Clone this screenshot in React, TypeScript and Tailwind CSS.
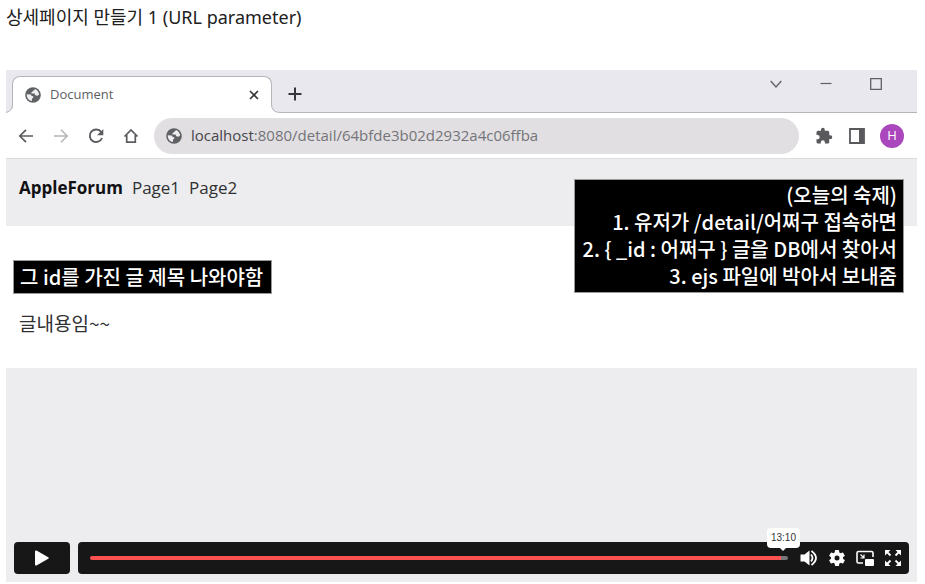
import { type ReactNode } from 'react';

const SANS = "font-['Noto_Sans','Noto_Sans_CJK_KR',sans-serif]";
const BROWSER = "font-['Open_Sans','Noto_Sans_CJK_KR',sans-serif]";
const KOREAN = "font-['Noto_Sans_CJK_KR',sans-serif]";

type IconProps = { className?: string; viewBox?: string; children: ReactNode };

function Icon({ className = 'size-5', viewBox = '0 0 24 24', children }: IconProps) {
  return (
    <svg className={`block shrink-0 ${className}`} viewBox={viewBox} fill="none" aria-hidden="true">
      {children}
    </svg>
  );
}

function IconButton({ label, className = '', children }: { label: string; className?: string; children: ReactNode }) {
  return (
    <button type="button" aria-label={label} className={`flex shrink-0 items-center justify-center ${className}`}>
      {children}
    </button>
  );
}

function Globe() {
  return (
    <Icon className="size-4" viewBox="0 0 16 16">
      <circle cx="8" cy="8" r="7.8" fill="#5f6165" />
      <path d="M1.8 7.2 5.6 7.600 6.800 9 8.300 9.300 8.100 11 7 11.500 6.900 14.100C3.800 13.600 1.500 10.600 1.800 7.200Z" fill="#eeeef0" />
      <path d="M9.800 2C9.800 3.600 8.200 3.300 7.700 4.300 7.600 5.200 5.800 5.200 6.300 6.500L9.500 6.600 10.300 8.200 12.200 8.700 14.100 7.800C13.900 5 12.400 2.800 9.800 2Z" fill="#eeeef0" />
    </Icon>
  );
}

function TabStrip() {
  return (
    <div className="flex h-[43px] items-end bg-[#e8e8ee]">
      <Icon className="relative z-10 -mr-px h-[37px] w-[7px]" viewBox="0 0 7 37">
        <path d="M0 37Q7 35 7 29V37Z" fill="#fff" />
        <path d="M0 36.500Q6.500 35 6.500 28" stroke="#b5b5bc" />
      </Icon>
      <div className="flex h-[37px] w-[260px] items-center rounded-t-lg border-x border-t border-[#b5b5bc] bg-white pr-[9px] pl-3">
        <Globe />
        <span className="ml-[9px] flex-1 text-[13px] text-[#606064]">Document</span>
        <IconButton label="Close tab" className="size-4">
          <Icon className="size-[10px]" viewBox="0 0 10 10">
            <path d="m1 1 8 8M9 1 1 9" stroke="#35353a" strokeWidth="1.6" />
          </Icon>
        </IconButton>
      </div>
      <Icon className="relative z-10 -ml-px h-[37px] w-[9px]" viewBox="0 0 9 37">
        <path d="M0 29H.5Q.5 36.500 9 36.500V37H0Z" fill="#fff" />
        <path d="M.5 28Q.5 36.500 9 36.500" stroke="#b5b5bc" />
      </Icon>
      <div className="flex h-full flex-1 items-start justify-between border-b border-[#b5b5bc] pr-[34px]">
        <IconButton label="New tab" className="mt-[15px] ml-[6px] size-[18px]">
          <Icon className="size-[14px]" viewBox="0 0 14 14">
            <path d="M7 .5v13M.5 7h13" stroke="#35353a" strokeWidth="2" />
          </Icon>
        </IconButton>
        <div className="mt-[7px] flex gap-[36px]">
          <IconButton label="Search tabs" className="size-[14px]">
            <Icon className="size-3" viewBox="0 0 12 12">
              <path d="m.7 3 5.300 6 5.300-6" stroke="#606064" strokeWidth="1.3" />
            </Icon>
          </IconButton>
          <IconButton label="Minimize" className="size-[14px]">
            <Icon className="size-3" viewBox="0 0 12 12">
              <path d="M0.5 5.500h11" stroke="#606064" strokeWidth="1.2" />
            </Icon>
          </IconButton>
          <IconButton label="Maximize" className="size-[14px]">
            <Icon className="size-3" viewBox="0 0 12 12">
              <path d="M.7.7h10.6v10.6H.7Z" stroke="#606064" strokeWidth="1.3" />
            </Icon>
          </IconButton>
        </div>
      </div>
    </div>
  );
}

function Toolbar() {
  return (
    <div className="flex h-[46px] items-center border-b border-[#dcdcdf] bg-white pr-[13px] pl-[10px]">
      <div className="flex gap-[15px]">
        <IconButton label="Back" className="size-5">
          <Icon className="size-4" viewBox="0 0 16 16">
            <path d="M15 8H2M8 1.8 1.8 8 8 14.2" stroke="#5c5c60" strokeWidth="1.7" />
          </Icon>
        </IconButton>
        <IconButton label="Forward" className="size-5">
          <Icon className="size-4" viewBox="0 0 16 16">
            <path d="M1 8h13M8 1.8 14.2 8 8 14.2" stroke="#b5b5b8" strokeWidth="1.5" />
          </Icon>
        </IconButton>
        <IconButton label="Reload" className="size-5">
          <Icon className="size-4" viewBox="0 0 16 16">
            <path d="M13.2 4A6.300 6.300 0 1 0 14 10" stroke="#5c5c60" strokeWidth="1.9" />
            <path d="M15.300 1v6.300H9Z" fill="#5c5c60" />
          </Icon>
        </IconButton>
        <IconButton label="Home" className="size-5">
          <Icon className="size-4" viewBox="0 0 16 16">
            <path d="M1.500 8.500 8 2l6.500 6.500M3.700 7v7.200h8.600V7" stroke="#5c5c60" strokeWidth="1.700" />
          </Icon>
        </IconButton>
      </div>
      <div className="mr-[15px] ml-[13px] flex h-9 flex-1 items-center rounded-full bg-[#e1dfe2] pl-3">
        <Globe />
        <div className="ml-[9px] text-[15px] text-[#747478]">
          <span className="text-[#454549]">localhost</span>:8080/detail/64bfde3b02d2932a4c06ffba
        </div>
      </div>
      <div className="flex items-center gap-[13px]">
        <IconButton label="Extensions" className="size-5">
          <Icon className="size-[18px]">
            <path d="M20.500 11H19V7a2 2 0 0 0-2-2h-4V3.500a2.500 2.500 0 0 0-5 0V5H4a2 2 0 0 0-2 2v3.800h1.500a2.700 2.700 0 0 1 0 5.400H2V20a2 2 0 0 0 2 2h3.800v-1.500a2.700 2.700 0 0 1 5.400 0V22H17a2 2 0 0 0 2-2v-4h1.500a2.500 2.500 0 0 0 0-5Z" fill="#59595d" />
          </Icon>
        </IconButton>
        <IconButton label="Side panel" className="size-5">
          <Icon className="size-4" viewBox="0 0 16 16">
            <path d="M1 1h14v14H1Z" stroke="#59595d" strokeWidth="1.800" />
            <path d="M10 1h5v14h-5Z" fill="#59595d" />
          </Icon>
        </IconButton>
        <IconButton label="Profile H" className="size-6 rounded-full bg-[#ab47bc] text-[13px] text-white">
          H
        </IconButton>
      </div>
    </div>
  );
}

function SitePage() {
  return (
    <div>
      <div className="relative">
        <nav className="flex h-[67px] items-start gap-[9px] bg-[#ededef] px-[13px] pt-4 text-[17px] leading-[26px] text-[#303033]">
          <a href="#home" className="font-bold text-[#111113]">AppleForum</a>
          <a href="#page1">Page1</a>
          <a href="#page2">Page2</a>
        </nav>
        <div className={`absolute top-[20px] right-[13px] border border-[#999] bg-black pt-px pr-[6px] pb-[3px] pl-2 text-right text-[20px] leading-[27px] font-medium text-white ${KOREAN}`}>
          <p>(오늘의 숙제)</p>
          <p>1. 유저가 /detail/어쩌구 접속하면</p>
          <p>{'2. { _id : 어쩌구 } 글을 DB에서 찾아서'}</p>
          <p>3. ejs 파일에 박아서 보내줌</p>
        </div>
      </div>
      <article className={`h-[142px] bg-white px-[7px] pt-[34px] ${KOREAN}`}>
        <h2 className="w-fit border border-[#999] bg-black pr-2 pl-[6px] text-[20px] leading-[32px] font-medium text-white">
          그 id를 가진 글 제목 나와야함
        </h2>
        <p className="mt-[17px] px-[6px] text-[19px] leading-[24px] text-[#303033]">글내용임~~</p>
      </article>
    </div>
  );
}

function PlayerControls() {
  return (
    <div className="flex gap-2 px-2 pb-2">
      <IconButton label="Play" className="h-8 w-14 rounded bg-[#171717]">
        <Icon className="h-4 w-[14px]" viewBox="0 0 14 16">
          <path d="M0 1.500Q0 0 1.500 .600L13.200 7.200Q14.500 8 13.200 8.800L1.500 15.400Q0 16 0 14.500Z" fill="#fff" />
        </Icon>
      </IconButton>
      <div className="flex h-8 flex-1 items-center rounded bg-[#171717] pr-[6px] pl-3">
        <div className="relative flex flex-1 items-center">
          <input
            type="range"
            aria-label="Playback position"
            min={0}
            max={1000}
            defaultValue={993}
            className="h-1 w-full appearance-none rounded-sm bg-linear-to-r from-[#ff5252] from-99% to-[#77777a] to-99% [&::-webkit-slider-thumb]:size-0 [&::-webkit-slider-thumb]:appearance-none"
          />
          <output className="absolute right-[-12px] bottom-3 rounded bg-white px-1 font-['Liberation_Sans',sans-serif] text-[10px] leading-[20px] text-[#333]">
            13:10
            <span className="absolute top-full left-1/2 -translate-x-1/2 border-x-3 border-t-3 border-x-transparent border-t-white" />
          </output>
        </div>
        <div className="ml-[11px] flex gap-2">
          <IconButton label="Volume" className="size-5">
            <Icon className="size-[18px]" viewBox="0 0 18 18">
              <path d="M.5 5.500h4L9.500 1.500v15L4.500 12.500h-4Z" fill="#fff" />
              <path d="M11 5.500Q14 9 11 12.500M11.500 2Q20.500 9 11.500 16" stroke="#fff" strokeWidth="1.800" />
            </Icon>
          </IconButton>
          <IconButton label="Settings" className="size-5">
            <Icon className="size-5">
              <path fillRule="evenodd" d="M19.140 12.940c.04-.3.060-.610.060-.940s-.02-.640-.07-.940l2.030-1.580a.49.49 0 0 0 .12-.61l-1.920-3.320a.49.49 0 0 0-.59-.22l-2.390.96a7 7 0 0 0-1.620-.94l-.36-2.540A.48.48 0 0 0 13.920 2.400h-3.840a.48.48 0 0 0-.48.410l-.36 2.540a7 7 0 0 0-1.620.94l-2.390-.96a.48.48 0 0 0-.59.22L2.720 8.870a.48.48 0 0 0 .12.61l2.030 1.580a7 7 0 0 0 0 1.880l-2.030 1.580a.49.49 0 0 0-.12.61l1.920 3.320c.12.22.37.29.59.22l2.390-.96a7 7 0 0 0 1.620.94l.36 2.540c.05.24.24.41.48.41h3.840c.24 0 .44-.17.48-.41l.36-2.540a7 7 0 0 0 1.620-.94l2.390.96c.22.08.47 0 .59-.22l1.920-3.320a.48.48 0 0 0-.12-.61ZM12 15a3 3 0 1 1 0-6 3 3 0 0 1 0 6Z" fill="#fff" />
            </Icon>
          </IconButton>
          <IconButton label="Picture in picture" className="size-5">
            <Icon className="size-[18px]" viewBox="0 0 18 18">
              <path d="M7 14H2.500Q1 14 1 12.500V4Q1 2.500 2.500 2.500H15.500Q17 2.500 17 4V8" stroke="#fff" strokeWidth="1.600" />
              <rect x="9" y="10" width="9" height="7" rx="1" fill="#fff" />
              <path d="m4.500 5.500 3 3M4.500 9H8V5.500" stroke="#fff" strokeWidth="1.200" />
            </Icon>
          </IconButton>
          <IconButton label="Fullscreen" className="size-5">
            <Icon className="size-4" viewBox="0 0 16 16">
              <path d="M0 0h5.500L0 5.500ZM16 0v5.500L10.500 0ZM16 16h-5.500l5.500-5.500ZM0 16v-5.500L5.500 16Z" fill="#fff" />
              <path d="m1.500 1.500 4 4M14.500 1.500l-4 4M14.500 14.500l-4-4M1.500 14.500l4-4" stroke="#fff" strokeWidth="1.800" />
            </Icon>
          </IconButton>
        </div>
      </div>
    </div>
  );
}

export default function App() {
  return (
    <main className={`bg-white pr-2 pl-[6px] ${SANS}`}>
      <h1 className="pt-[5px] text-[18px] leading-6 text-[#202020]">상세페이지 만들기 1 (URL parameter)</h1>
      <section aria-label="Lecture video" className={`mt-[41px] bg-[#ededef] ${BROWSER}`}>
        <TabStrip />
        <Toolbar />
        <SitePage />
        <div className="pt-[174px]">
          <PlayerControls />
        </div>
      </section>
    </main>
  );
}
